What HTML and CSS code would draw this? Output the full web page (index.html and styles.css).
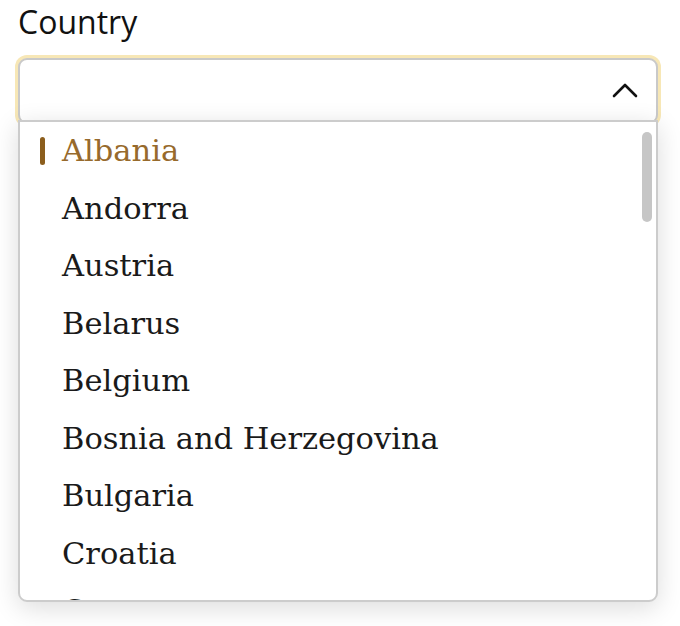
FILE: index.html
```html
<!DOCTYPE html>
<html lang="en">
<head>
<meta charset="utf-8">
<title>Country select</title>
<link rel="stylesheet" href="styles.css">
</head>
<body>
<div class="field">
  <label class="label">Country</label>
  <div class="select">
    <div class="control">
      <svg class="chev" width="26" height="16" viewBox="0 0 26 16" aria-hidden="true">
        <polyline points="2,14 13,3 24,14" fill="none" stroke="#111" stroke-width="2.6" stroke-linecap="round" stroke-linejoin="round"/>
      </svg>
    </div>
    <div class="menu">
      <ul class="list">
        <li class="item active">Albania</li>
        <li class="item">Andorra</li>
        <li class="item">Austria</li>
        <li class="item">Belarus</li>
        <li class="item">Belgium</li>
        <li class="item">Bosnia and Herzegovina</li>
        <li class="item">Bulgaria</li>
        <li class="item">Croatia</li>
        <li class="item">Cyprus</li>
      </ul>
      <div class="thumb"></div>
    </div>
  </div>
</div>
</body>
</html>
```

FILE: styles.css
```css
html, body {
  margin: 0;
  padding: 0;
  background: #ffffff;
  min-height: 626px;
}

.field {
  padding: 2px 22px 0 18px;
}

.label {
  display: block;
  font-family: "Open Sans", Roboto, "Liberation Sans", sans-serif;
  font-size: 32px;
  line-height: 40px;
  color: #111;
  margin-bottom: 16px;
}

.select {
  width: 640px;
}

.control {
  box-sizing: border-box;
  height: 66px;
  border: 2px solid #c9c9c9;
  border-radius: 9px;
  background: #fff;
  box-shadow: 0 0 0 3px #f7e7b6;
  display: flex;
  align-items: center;
  justify-content: flex-end;
  padding-right: 18px;
}

.chev {
  display: block;
  margin-top: -2px;
}

.menu {
  position: relative;
  z-index: 1;
  margin-top: -4px;
  box-sizing: border-box;
  height: 482px;
  background: #fff;
  border: 2px solid #cccccc;
  border-radius: 0 0 9px 9px;
  box-shadow: 0 6px 26px rgba(0, 0, 0, 0.14);
  overflow: hidden;
}

.list {
  margin: 0;
  padding: 0;
  list-style: none;
}

.thumb {
  position: absolute;
  right: 4px;
  top: 10px;
  width: 10px;
  height: 90px;
  border-radius: 5px;
  background: #c6c6c6;
}

.item {
  display: flex;
  align-items: center;
  height: 57.5px;
  padding-left: 20px;
  font-family: "DejaVu Serif", serif;
  font-size: 30.5px;
  color: #1a1a1a;
  white-space: nowrap;
}

.item::before {
  content: "";
  flex: none;
  width: 5px;
  height: 28px;
  border-radius: 3px;
  margin-right: 17px;
  background: #8c5e1d;
  visibility: hidden;
}

.item.active {
  color: #976a2c;
}

.item.active::before {
  visibility: visible;
}
```
